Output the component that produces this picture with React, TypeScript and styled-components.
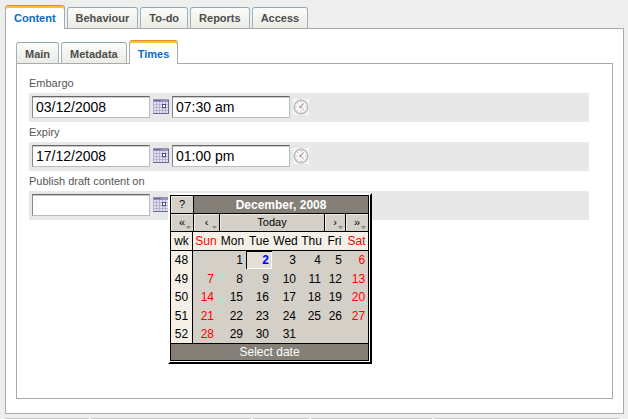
import React from 'react';
import styled, { createGlobalStyle } from 'styled-components';

const Global = createGlobalStyle`
  *, *::before, *::after { box-sizing: border-box; }
  html { height: 100%; }
  body {
    margin: 0;
    min-height: 100%;
    background: #eee;
    color: #555;
    font-family: "Liberation Sans", Arial, Helvetica, sans-serif;
    font-size: 11px;
  }
  button, input { font-family: inherit; }
`;

const Page = styled.main`
  padding: 5px 4px 0 5px;
  overflow: hidden;
`;

const TabList = styled.div`
  display: flex;
  align-items: flex-end;
  gap: 2px;
  margin-bottom: -1px;
`;

const Tab = styled.button<{ $active?: boolean }>`
  position: relative;
  height: ${p => (p.$active ? 24 : 21)}px;
  margin: 0 0 ${p => (p.$active ? 0 : 1)}px;
  padding: ${p => (p.$active ? '2px 8px 0' : '2px 8px 0')};
  border: 1px solid ${p => (p.$active ? '#aaa' : '#9cb1bb')};
  border-top-color: ${p => (p.$active ? '#e0912c' : '#8fa8b5')};
  border-bottom: 0;
  border-radius: 3px 3px 0 0;
  background: ${p => (p.$active ? '#fff' : 'linear-gradient(#fbfbf8, #ebece5)')};
  box-shadow: ${p => (p.$active ? 'inset 0 2px 0 #fdbf3a' : 'none')};
  color: ${p => (p.$active ? '#0a6cc8' : '#4d4d4d')};
  font-size: 11px;
  font-weight: bold;
  line-height: 18px;
  white-space: nowrap;
`;

const OuterTab = styled(Tab)`
  padding-top: 0;
`;

const Panel = styled.section`
  border: 1px solid #aaa;
  background: #fff;
`;

const OuterPanel = styled(Panel)`
  padding: 11px 10px 14px;
`;

const InnerPanel = styled(Panel)`
  min-height: 336px;
  padding: 9px 23px 0 12px;
`;

const Label = styled.label`
  display: block;
  height: 20px;
  line-height: 20px;
  color: #555;
`;

const FieldBar = styled.div`
  display: flex;
  align-items: flex-start;
  gap: 3px;
  height: 29px;
  padding: 3px;
  background: #e8e8e8;
`;

const TextBox = styled.input`
  width: 118px;
  height: 22px;
  padding: 0 3px;
  border: 1px solid #bbb;
  border-top: 1px solid #666;
  border-left-color: #888;
  border-radius: 0;
  background: #fff;
  box-shadow: inset 0 1px 0 #ccc;
  color: #000;
  font-size: 14px;
`;

const IconButton = styled.button`
  display: block;
  width: 16px;
  height: 16px;
  margin: 3px 0 0;
  padding: 0;
  border: 0;
  background: none;
`;

const PickerAnchor = styled.div`
  position: relative;
`;

const Popup = styled.div`
  position: absolute;
  top: -1px;
  left: 15px;
  z-index: 1;
  padding: 0 1px 1px 0;
  border: 2px solid;
  border-color: #fff #000 #000 #fff;
  background: #fff;
`;

const Calendar = styled.table`
  width: 199px;
  table-layout: fixed;
  border: 1px solid #000;
  border-spacing: 0;
  background: #d4d0c8;
  color: #000;
  font-size: 12px;
  th, td { padding: 0; font-weight: normal; }
  tbody tr:nth-child(even) th { height: 19px; }
`;

const TitleCell = styled.th`
  height: 18px;
  border-bottom: 1px solid #000;
  border-left: 1px solid #000;
  background: #848078;
  color: #fff;
  && { font-weight: bold; }
`;

const NavCell = styled.th<{ $first?: boolean }>`
  height: 18px;
  border-bottom: 1px solid #000;
  border-left: ${p => (p.$first ? 0 : 1)}px solid #000;
`;

const NavButton = styled.button`
  display: flex;
  align-items: center;
  justify-content: center;
  position: relative;
  width: 100%;
  height: 17px;
  padding: 0;
  border: 1px solid;
  border-color: #f0ede6 #d4d0c8 #d4d0c8 #f0ede6;
  background: #d4d0c8;
  color: #000;
  font-size: 11px;
  line-height: 15px;
`;

const MenuMark = styled.svg`
  position: absolute;
  right: 1px;
  bottom: 1px;
`;

const DayName = styled.th<{ $weekend?: boolean }>`
  height: 19px;
  border-bottom: 1px solid #000;
  background: #f4f0e8;
  color: ${p => (p.$weekend ? '#f00' : '#000')};
  text-align: center;
`;

const WeekNumber = styled.th`
  height: 18px;
  border-right: 1px solid #000;
  background: #f4f0e8;
  text-align: center;
`;

const WeekHead = styled(DayName)`
  border-right: 1px solid #000;
`;

const DayCell = styled.td<{ $weekend?: boolean; $selected?: boolean }>`
  color: ${p => (p.$weekend ? '#f00' : '#000')};
  box-shadow: ${p => (p.$selected ? 'inset 1px 1px 0 #000, inset -1px -1px 0 #fff' : 'none')};
  background: ${p => (p.$selected ? '#e4e0d8' : 'transparent')};
  &:nth-child(2) button { padding-right: 5px; }
`;

const DayButton = styled.button<{ $selected?: boolean }>`
  display: block;
  width: 100%;
  height: 18px;
  padding: 0 3px 0 0;
  border: 0;
  background: none;
  color: ${p => (p.$selected ? '#00f' : 'inherit')};
  font-size: 12px;
  font-weight: ${p => (p.$selected ? 'bold' : 'normal')};
  line-height: 18px;
  text-align: right;
`;

const FootCell = styled.td`
  height: 17px;
  border-top: 1px solid #000;
  background: #848078;
  color: #fff;
  text-align: center;
`;

const BottomStrip = styled.div`
  display: grid;
  grid-template-columns: 84fr 159fr 56fr 121fr 184fr;
  gap: 2px;
  margin-top: 4px;
  padding-right: 5px;
`;

const StripCell = styled.div`
  height: 1px;
  background: #c8c8c8;
`;

const CalendarIcon = () => (
  <svg width="16" height="16" viewBox="0 0 16 16" shapeRendering="crispEdges" aria-hidden="true">
    <rect width="16" height="15" fill="#b4b4d2" />
    <path d="M0 .5h16M0 1.5h16M0 2.5h16" stroke="#9595bb" />
    <path d="M1 1.5h7" stroke="#6464a0" />
    <path d="M1 3h2v2H1zM4 3h2v2H4zM7 3h2v2H7zM10 3h2v2h-2zM13 3h2v2h-2zM1 6h2v2H1zM4 6h2v2H4zM7 6h2v2H7zM13 6h2v2h-2zM1 9h2v2H1zM4 9h2v2H4zM7 9h2v2H7zM10 10h2v1h-2zM13 9h2v2h-2zM1 12h2v2H1zM4 12h2v2H4zM7 12h2v2H7zM10 12h2v2h-2zM13 12h2v2h-2z" fill="#e2e2ef" />
    <path d="M9.500 5.500h3v3h-3z" fill="#fff" stroke="#50508e" />
    <path d="M0 14.500h16M15.500 1v14" stroke="#6a6a9a" />
  </svg>
);

const ClockIcon = () => (
  <svg width="16" height="16" viewBox="0 0 16 16" aria-hidden="true">
    <rect width="16" height="16" fill="#f6f6f6" />
    <circle cx="8" cy="8" r="6.800" fill="#f8f8f8" stroke="#bbb" strokeWidth="1.500" />
    <path d="M8 2.500v1M8 12.500v1M2.500 8h1M12.500 8h1M4 4l.6.6M4 12l.6-.6" stroke="#aaa" />
    <path d="M10.500 4.500 7.500 8H6M7.500 8l1 1" fill="none" stroke="#777" />
    <path d="m8.500 8.500 2.500 3" stroke="#e79a9a" />
  </svg>
);

const Mark = () => (
  <MenuMark width="5" height="3" viewBox="0 0 5 3" aria-hidden="true">
    <path d="M0 0h5L2.500 3z" fill="#888" />
  </MenuMark>
);

const outerTabs = ['Content', 'Behaviour', 'To-do', 'Reports', 'Access'];
const innerTabs = ['Main', 'Metadata', 'Times'];
const dayNames = ['Sun', 'Mon', 'Tue', 'Wed', 'Thu', 'Fri', 'Sat'];
const columnWidths = [22, 26, 27, 26, 27, 25, 21, 23];
const weeks = [48, 49, 50, 51, 52];
const stripCells = ['a', 'b', 'c', 'd', 'e'];

const DateTimeField = ({ id, label, date, time }: { id: string; label: string; date: string; time: string }) => (
  <div>
    <Label htmlFor={id}>{label}</Label>
    <FieldBar>
      <TextBox id={id} defaultValue={date} />
      <IconButton type="button" aria-label={`${label} calendar`}><CalendarIcon /></IconButton>
      <TextBox defaultValue={time} aria-label={`${label} time`} />
      <IconButton type="button" aria-label={`${label} clock`}><ClockIcon /></IconButton>
    </FieldBar>
  </div>
);

const DatePicker = () => (
  <Popup>
    <Calendar>
      <colgroup>{columnWidths.map((w, i) => <col key={i} width={w} />)}</colgroup>
      <thead>
        <tr>
          <NavCell $first><NavButton type="button">?</NavButton></NavCell>
          <TitleCell colSpan={7}>December, 2008</TitleCell>
        </tr>
        <tr>
          <NavCell $first><NavButton type="button">«<Mark /></NavButton></NavCell>
          <NavCell><NavButton type="button">‹<Mark /></NavButton></NavCell>
          <NavCell colSpan={4}><NavButton type="button">Today</NavButton></NavCell>
          <NavCell><NavButton type="button">›<Mark /></NavButton></NavCell>
          <NavCell><NavButton type="button">»<Mark /></NavButton></NavCell>
        </tr>
        <tr>
          <WeekHead>wk</WeekHead>
          {dayNames.map((d, i) => <DayName key={d} $weekend={i % 6 === 0}>{d}</DayName>)}
        </tr>
      </thead>
      <tbody>
        {weeks.map((week, row) => (
          <tr key={week}>
            <WeekNumber>{week}</WeekNumber>
            {dayNames.map((d, col) => {
              const day = row * 7 + col;
              const selected = day === 2;
              return (
                <DayCell key={d} $weekend={col % 6 === 0} $selected={selected}>
                  {day > 0 && day < 32 && <DayButton type="button" $selected={selected}>{day}</DayButton>}
                </DayCell>
              );
            })}
          </tr>
        ))}
      </tbody>
      <tfoot><tr><FootCell colSpan={8}>Select date</FootCell></tr></tfoot>
    </Calendar>
  </Popup>
);

export default function App() {
  return (
    <Page>
      <Global />
      <TabList role="tablist">
        {outerTabs.map((t, i) => <OuterTab key={t} type="button" role="tab" aria-selected={i === 0} $active={i === 0}>{t}</OuterTab>)}
      </TabList>
      <OuterPanel>
        <TabList role="tablist">
          {innerTabs.map((t, i) => <Tab key={t} type="button" role="tab" aria-selected={i === 2} $active={i === 2}>{t}</Tab>)}
        </TabList>
        <InnerPanel>
          <DateTimeField id="embargo" label="Embargo" date="03/12/2008" time="07:30 am" />
          <DateTimeField id="expiry" label="Expiry" date="17/12/2008" time="01:00 pm" />
          <Label htmlFor="publish">Publish draft content on</Label>
          <FieldBar>
            <TextBox id="publish" />
            <PickerAnchor>
              <IconButton type="button" aria-label="Publish calendar"><CalendarIcon /></IconButton>
              <DatePicker />
            </PickerAnchor>
          </FieldBar>
        </InnerPanel>
      </OuterPanel>
      <BottomStrip>{stripCells.map(c => <StripCell key={c} />)}</BottomStrip>
    </Page>
  );
}
